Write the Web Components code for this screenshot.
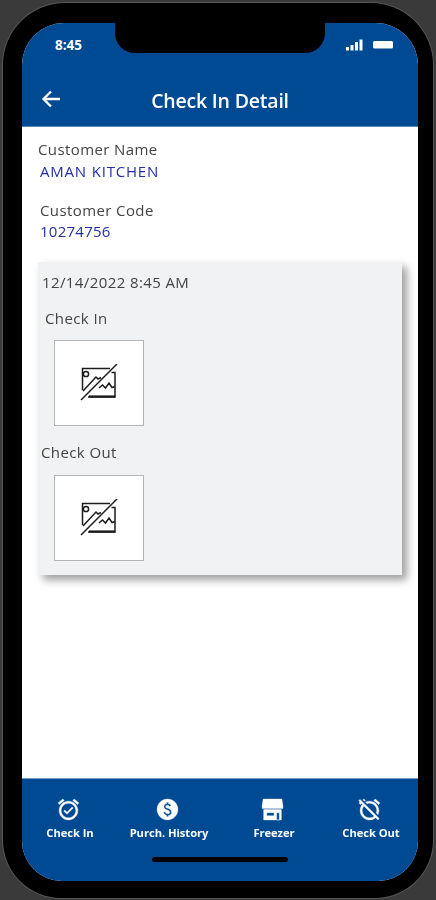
<!DOCTYPE html>
<html lang="en"><head><meta charset="utf-8"><title>Check In Detail</title>
<style>
html,body{margin:0;height:100%;background:#3a3a3a}
body{padding:3px 3px 0;box-sizing:border-box;font-family:"Open Sans","Noto Sans",sans-serif;overflow:hidden}
</style></head><body>
<phone-frame>
  <app-header slot="top" title="Check In Detail" time="8:45"></app-header>
  <info-field label="Customer Name" value="AMAN KITCHEN" style="--lx:16px;--vx:18px;--top:12px;--vm:2px;--vs:.8px"></info-field>
  <info-field label="Customer Code" value="10274756" style="--lx:18px;--vx:18px;--top:19px;--vm:1px;--vs:.25px"></info-field>
  <check-card date="12/14/2022 8:45 AM">
    <photo-slot label="Check In" style="--lx:3px;--top:16px;--gap:12px"></photo-slot>
    <photo-slot label="Check Out" style="--lx:-1px;--top:16px;--gap:13px"></photo-slot>
  </check-card>
  <bottom-nav slot="bottom">
    <nav-item label="Check In" icon="on"></nav-item>
    <nav-item label="Purch. History" icon="paid"></nav-item>
    <nav-item label="Freezer" icon="store"></nav-item>
    <nav-item label="Check Out" icon="off"></nav-item>
  </bottom-nav>
</phone-frame>
<script>
function shadow(el,html){el.attachShadow({mode:'open'}).innerHTML=html;}
customElements.define('phone-frame',class extends HTMLElement{constructor(){super();shadow(this,`<style>
:host{display:block;width:430px;height:895px;box-sizing:border-box;background:#000;border-radius:62px 62px 58px 58px;padding:20px 15px 17px 19px;box-shadow:0 0 0 1px #565656;filter:blur(.5px)}
.screen{position:relative;height:100%;width:396px;border-radius:42px 42px 40px 40px;overflow:hidden;background:#fff;display:flex;flex-direction:column}
main{flex:1;min-height:0;display:block}
.notch{position:absolute;left:93px;top:0;width:210px;height:30px;background:#000;border-radius:0 0 20px 20px}
</style><div class="screen"><slot name="top"></slot><main><slot></slot></main><slot name="bottom"></slot><div class="notch"></div></div>`);}});
customElements.define('app-header',class extends HTMLElement{constructor(){super();shadow(this,`<style>
:host{display:block;height:104px;box-sizing:border-box;background:#004993;border-bottom:1px solid #5d85b5;color:#fff;padding:15px 24px 0 33px}
.status{display:flex;justify-content:space-between;align-items:center;height:14px;font:700 13.5px "Open Sans",sans-serif}
.status svg{display:block}
.bar{display:grid;grid-template-columns:40px 1fr 40px;align-items:center;margin:33px -4px 0 -13px;height:30px}
.bar svg{display:block;margin:0 0 2px -1px}
h1{margin:0;text-align:center;font:600 19.5px "Open Sans",sans-serif;letter-spacing:-.2px;white-space:nowrap}
</style><div class="status"><span>${this.getAttribute('time')}</span>
<svg width="48" height="12" viewBox="0 0 48 12" fill="#fff"><rect x="0" y="8" width="3" height="3.500"/><rect x="4.500" y="6" width="3" height="5.500"/><rect x="9" y="3" width="3" height="8.500"/><rect x="13.500" y="0.500" width="3" height="11"/><rect x="27" y="2" width="20" height="7.500" rx="1.500"/></svg></div>
<div class="bar"><svg width="20" height="20" viewBox="0 0 20 20" fill="none" stroke="#fff" stroke-width="2.300"><path d="M19 10H3M10 2.500 2.500 10l7.500 7.500"/></svg><h1>${this.getAttribute('title')}</h1><span></span></div>`);}});
customElements.define('info-field',class extends HTMLElement{constructor(){super();shadow(this,`<style>
:host{display:block;margin-top:var(--top);font:15px/20px "Open Sans",sans-serif;letter-spacing:.4px}
.l{padding-left:var(--lx);color:#444}.v{padding-left:var(--vx);margin-top:var(--vm);color:#2230a6;font-weight:500;letter-spacing:var(--vs)}
</style><div class="l">${this.getAttribute('label')}</div><div class="v">${this.getAttribute('value')}</div>`);}});
customElements.define('check-card',class extends HTMLElement{constructor(){super();shadow(this,`<style>
:host{display:block;box-sizing:border-box;width:364px;height:313px;margin:21px 0 0 16px;padding:10px 0 0 4px;background:#f1f2f4;box-shadow:5px 5px 8px rgba(0,0,0,.38);font:15px/20px "Open Sans",sans-serif;color:#444;letter-spacing:.4px}
</style><div>${this.getAttribute('date')}</div><slot></slot>`);}});
customElements.define('photo-slot',class extends HTMLElement{constructor(){super();shadow(this,`<style>
:host{display:block;margin-top:var(--top)}
.l{margin-left:var(--lx);height:20px}
.box{box-sizing:border-box;width:90px;height:86px;margin:var(--gap) 0 0 12px;background:#fff;border:1px solid #b4b4b4;display:flex;align-items:center;justify-content:center}
svg{display:block}
</style><div class="l">${this.getAttribute('label')}</div><div class="box">
<svg width="38" height="38" viewBox="0 0 38 38" fill="none" stroke="#1c1c1c" stroke-width="1.500">
<path d="M30 4.500H2.500V26M31.500 8.500h3.500V33H8" />
<path stroke-width="2.200" d="M9 32.500H35"/>
<path d="M1 36 37 0"/>
<circle cx="6" cy="10" r="2.600"/>
<path d="M3 27 16 13l2 2 3-1.500"/>
<path d="M19 24l3.500-3 3 3 3.500-5 3 4.500 3-1"/>
</svg></div>`);}});
customElements.define('bottom-nav',class extends HTMLElement{constructor(){super();shadow(this,`<style>
:host{display:block;height:103px;box-sizing:border-box;background:#004993;border-top:1px solid #7d9cc4;padding-top:19px}
.row{display:grid;grid-template-columns:96px 102px 108px 86px}
.home{width:136px;height:5px;border-radius:3px;background:#000;margin:17px 0 0 130px}
</style><div class="row"><slot></slot></div><div class="home"></div>`);}});
const ICONS={
on:'<path d="M22 5.720l-4.600-3.860-1.290 1.530 4.600 3.860L22 5.720zM7.880 3.390L6.600 1.860 2 5.710l1.290 1.530 4.590-3.850zM12 4c-4.970 0-9 4.030-9 9s4.020 9 9 9c4.970 0 9-4.030 9-9s-4.030-9-9-9zm0 16c-3.870 0-7-3.130-7-7s3.130-7 7-7 7 3.130 7 7-3.130 7-7 7zm-1.460-5.470L8.410 12.400l-1.060 1.060 3.180 3.180 6-6-1.060-1.060-4.930 4.950z"/>',
off:'<path d="M12 6c3.870 0 7 3.130 7 7 0 .84-.16 1.650-.43 2.400l1.520 1.520c.58-1.190.91-2.510.91-3.920 0-4.970-4.030-9-9-9-1.410 0-2.730.33-3.920.91L9.600 6.430C10.350 6.160 11.160 6 12 6zm10-.28l-4.600-3.860-1.290 1.530 4.600 3.860L22 5.720zM2.920 2.290L1.650 3.570 2.980 4.900l-1.110.93 1.420 1.420 1.110-.94.8.8C3.830 8.690 3 10.750 3 13c0 4.970 4.020 9 9 9 2.250 0 4.310-.83 5.890-2.200l2.200 2.200 1.270-1.270L3.890 3.270l-.97-.98zm13.550 16.100C15.260 19.390 13.700 20 12 20c-3.870 0-7-3.130-7-7 0-1.700.61-3.260 1.610-4.470l9.860 9.860zM8.020 3.280L6.600 1.860l-.86.71 1.420 1.420.86-.71z"/>',
paid:'<path d="M12 2C6.480 2 2 6.480 2 12s4.480 10 10 10 10-4.480 10-10S17.520 2 12 2zm.88 15.760V19h-1.750v-1.290c-.74-.18-2.390-.77-3.020-2.960l1.650-.67c.06.22.58 2.090 2.400 2.090.93 0 1.980-.48 1.980-1.610 0-.96-.7-1.460-2.280-2.030-1.100-.39-3.350-1.030-3.350-3.310 0-.1.01-2.400 2.620-2.960V5h1.750v1.240c1.840.32 2.510 1.790 2.660 2.230l-1.580.67c-.11-.35-.59-1.340-1.900-1.340-.7 0-1.810.37-1.810 1.390 0 .95.86 1.310 2.640 1.900 2.400.83 3.010 2.050 3.010 3.450 0 2.630-2.500 3.130-3.020 3.220z"/>',
store:'<path fill-rule="evenodd" d="M3 2h18l1 6.500v2.500H2V8.500zM3.500 12h17v10h-17zM6.500 15v3h7v-3zM16 15v7h2.500v-7z"/>'};
customElements.define('nav-item',class extends HTMLElement{constructor(){super();shadow(this,`<style>
:host{display:flex;flex-direction:column;align-items:center;color:#fff;font:700 11.2px/14px "Open Sans",sans-serif;letter-spacing:-.05px;white-space:nowrap}
svg{display:block;margin:-1px 0 4px -3px}
</style><svg width="25" height="25" viewBox="0 0 24 24" fill="#fff" stroke="#fff" stroke-width=".35">${ICONS[this.getAttribute('icon')]}</svg><span>${this.getAttribute('label')}</span>`);}});
</script></body></html>
